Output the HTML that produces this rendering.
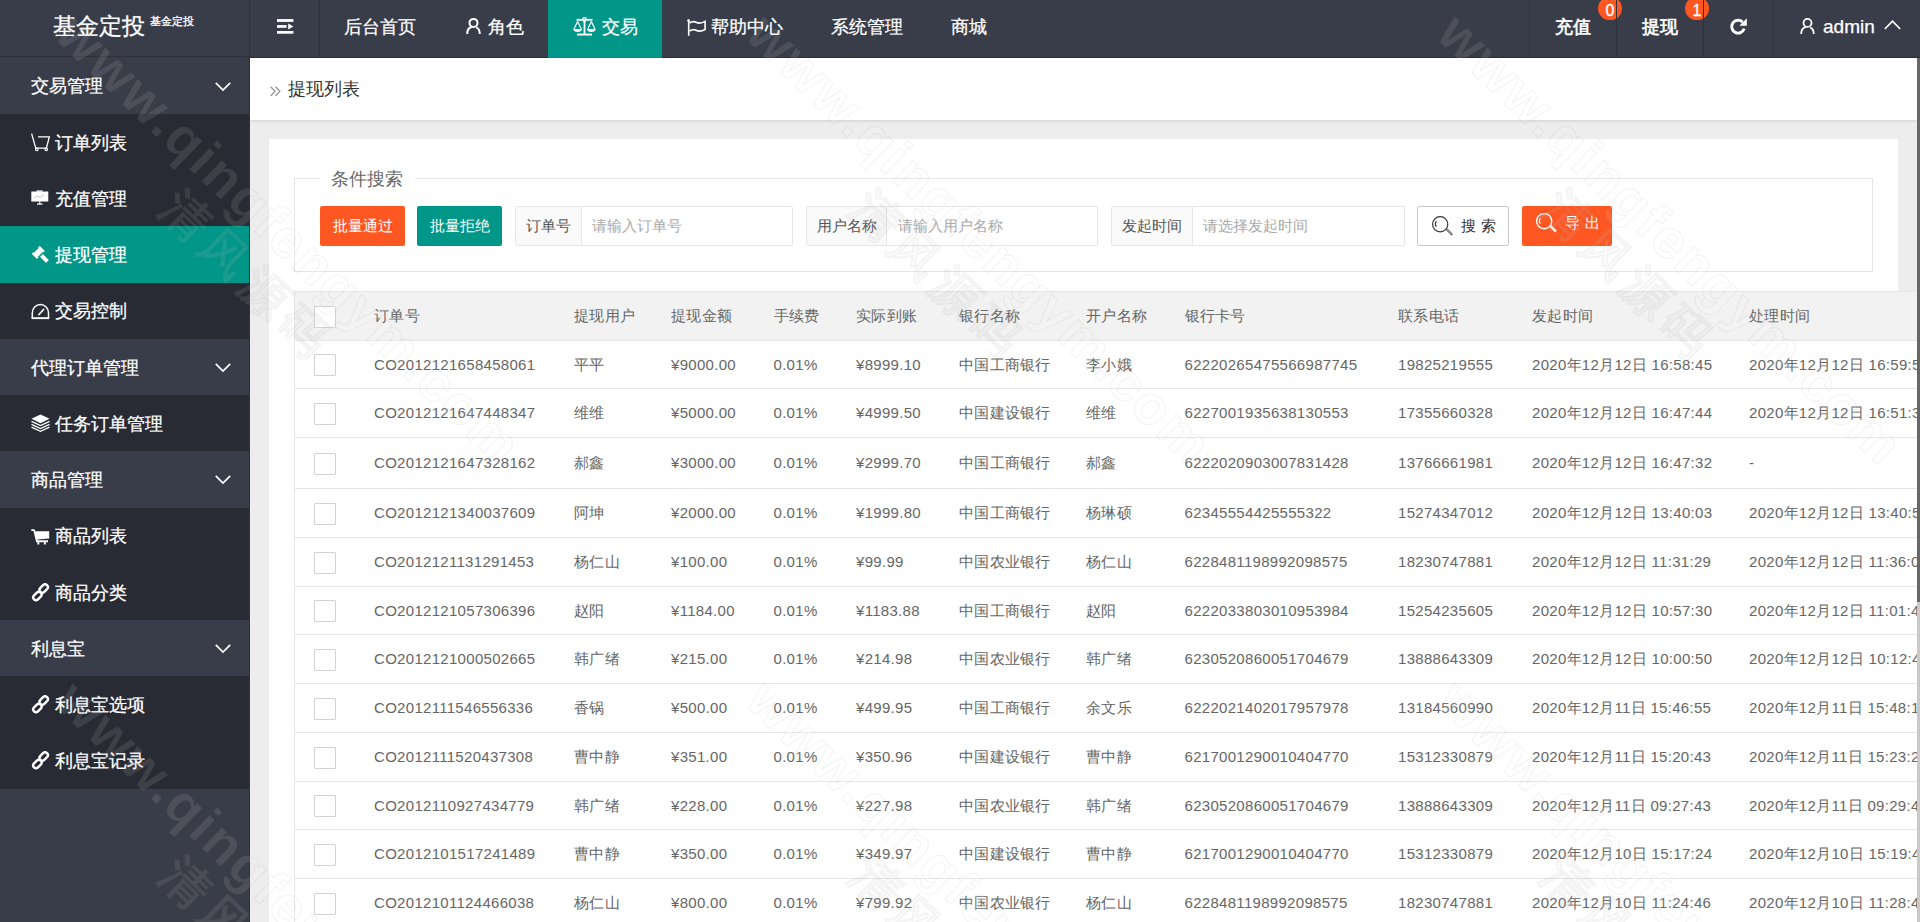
<!DOCTYPE html>
<html><head><meta charset="utf-8">
<style>
*{margin:0;padding:0;box-sizing:border-box}
html,body{width:1920px;height:922px;overflow:hidden;background:#EDEDED;font-family:"Liberation Sans",sans-serif;position:relative}
.abs{position:absolute}
svg{position:absolute;overflow:visible}
/* header */
#logo{position:absolute;left:0;top:0;width:250px;height:57px;background:#393D49;border-bottom:1px solid #2F323C;border-right:1px solid #2F323C}
#hdr{position:absolute;left:250px;top:0;width:1670px;height:58px;background:#393D49;border-bottom:1px solid #2C2F38}
.sep{position:absolute;top:0;width:1px;height:57px;background:#30333D;z-index:2}
.ht{position:absolute;color:#fff;font-size:17.5px;line-height:20px;top:17px;white-space:nowrap;-webkit-text-stroke:0.25px #fff}
#active{position:absolute;left:548px;top:0;width:114px;height:58px;background:#009688}
.badge{position:absolute;top:-3px;width:24px;height:23px;border-radius:12px;background:#FF5722;color:#fff;font-size:16px;line-height:27px;text-align:center;-webkit-text-stroke:0.3px #fff}
/* sidebar */
#side{position:absolute;left:0;top:57px;width:250px;height:865px;background:#393D49;border-right:1px solid #2F323C}
.mi{position:absolute;left:0;width:249px;height:56.25px;color:#fff;font-size:17.5px;-webkit-text-stroke:0.25px #fff}
.mi span{position:absolute;left:31px;top:18.75px;line-height:20px;white-space:nowrap}
.mi.sub span{left:55px}
.sub{background:#282B33}
.sel{background:#009688}
/* content */
#crumb{position:absolute;left:250px;top:58px;width:1667px;height:62px;background:#fff;box-shadow:0 1px 3px rgba(0,0,0,.12)}
#card{position:absolute;left:269px;top:139px;width:1629px;height:800px;background:#fff}
#fs{position:absolute;left:294px;top:178px;width:1579px;height:94px;border:1px solid #e6e6e6}
#legend{position:absolute;left:319.5px;top:168px;width:95px;height:22px;background:#fff;color:#666;font-size:17.5px;line-height:22px;text-align:center}
.btn{position:absolute;top:206px;height:40px;border-radius:2px;color:#fff;font-size:15px;line-height:40px;text-align:center;white-space:nowrap}
.ig{position:absolute;top:206px;height:40px;border:1px solid #e6e6e6;border-radius:2px;background:#fff}
.ig b{position:absolute;left:0;top:0;height:38px;background:#FAFAFA;border-right:1px solid #e6e6e6;font-weight:normal;color:#555;font-size:15px;line-height:38px;padding-left:10px}
.ig em{position:absolute;top:0;font-style:normal;color:#aaa;font-size:15px;line-height:38px}
/* table */
.tr{position:absolute;left:294px;width:1623px;border-bottom:1px solid #e6e6e6;background:#fff;color:#666;font-size:15px;letter-spacing:0.3px}
.tr.th{background:#F2F2F2;border-top:1px solid #e6e6e6}
.tr .c{position:absolute;top:50%;transform:translateY(-50%);line-height:20px;white-space:nowrap;margin-left:-295px}
.cb{position:absolute;left:19px;top:50%;margin-top:-10.5px;width:21.75px;height:22px;border:1px solid #d2d2d2;border-radius:1px;background:#fff}
#tblwrap{position:absolute;left:0;top:0;width:1917px;height:922px;overflow:hidden}
#tblwrap .tr:first-child{border-left:1px solid #e6e6e6}
.tr{border-left:1px solid #e6e6e6}
.wl{font-family:"Liberation Sans",sans-serif;font-weight:bold;font-size:55px;letter-spacing:2.2px;fill:rgba(255,255,255,0.1);stroke:rgba(0,0,0,0.055);stroke-width:1px}
.wc{font-family:"Liberation Sans",sans-serif;font-weight:bold;font-size:48px;letter-spacing:7px;fill:rgba(255,255,255,0.1);stroke:rgba(0,0,0,0.045);stroke-width:1px}
#scroll{position:absolute;left:1917px;top:58px;width:3px;height:864px;background:linear-gradient(#676767 0,#676767 544px,#C9C9C9 544px,#C9C9C9 100%);z-index:5}
</style></head>
<body>
<div id="logo">
  <div class="abs" style="left:53px;top:14.5px;color:#fff;font-size:22.5px;line-height:24px;white-space:nowrap;-webkit-text-stroke:0.3px #fff">基金定投</div>
  <div class="abs" style="left:150px;top:15px;color:#fff;font-size:11.25px;line-height:12px;white-space:nowrap;-webkit-text-stroke:0.3px #fff">基金定投</div>
</div>
<div id="hdr"></div>
<div class="sep" style="left:319px"></div>
<div id="active"></div>
<div class="sep" style="left:1529px"></div>
<div class="sep" style="left:1616px"></div>
<div class="sep" style="left:1703px"></div>
<div class="sep" style="left:1773px"></div>
<!-- hamburger -->
<svg style="left:277px;top:18px" width="18" height="17" viewBox="0 0 18 17"><rect x="0" y="1.1" width="16.4" height="2.8" fill="#fff"/><rect x="0" y="7.1" width="9.6" height="2.7" fill="#fff"/><path d="M11.2 5.4 L16.4 8.45 L11.2 11.5Z" fill="#fff"/><rect x="0" y="13" width="16.4" height="2.7" fill="#fff"/></svg>
<div class="ht" style="left:344px">后台首页</div>
<svg style="left:466px;top:18px" width="15" height="16" viewBox="0 0 15 16"><circle cx="7.5" cy="4.9" r="4" fill="none" stroke="#fff" stroke-width="2"/><path d="M1.2 16 C1.2 11.5 3.5 9.3 6.2 8.8 M10.2 9.4 C12.4 10.4 13.8 12.6 13.8 16" fill="none" stroke="#fff" stroke-width="2"/></svg>
<div class="ht" style="left:488px">角色</div>
<svg style="left:573px;top:17px" width="23" height="19" viewBox="0 0 23 19"><rect x="3.5" y="1.9" width="16" height="1.8" fill="#fff"/><circle cx="11.5" cy="2.5" r="1.8" fill="none" stroke="#fff" stroke-width="1.3"/><rect x="10.6" y="3.8" width="1.8" height="13" fill="#fff"/><rect x="4" y="16.6" width="15" height="1.9" fill="#fff"/><path d="M4.6 4.5 L1 12 M4.6 4.5 L8.3 12 M18.4 4.5 L14.8 12 M18.4 4.5 L22 12" stroke="#fff" stroke-width="1.2" fill="none"/><path d="M0.3 12 H9 C9 14 7 15 4.6 15 C2.2 15 0.3 14 0.3 12Z M14 12 H22.7 C22.7 14 20.8 15 18.4 15 C16 15 14 14 14 12Z" fill="#fff"/></svg>
<div class="ht" style="left:602px">交易</div>
<svg style="left:687px;top:19px" width="19" height="17" viewBox="0 0 19 17"><circle cx="1.6" cy="1.6" r="1.4" fill="#fff"/><rect x="0.9" y="1.5" width="1.6" height="15.3" fill="#fff"/><path d="M2.6 4 C4.8 2.4 7 2.3 9 3.3 C11 4.3 13.5 5 18.1 2.4 V10.5 C13.5 13 11 12.3 9 11.3 C7 10.3 4.8 10.4 2.6 12.2" fill="none" stroke="#fff" stroke-width="1.6"/></svg>
<div class="ht" style="left:711px">帮助中心</div>
<div class="ht" style="left:831px">系统管理</div>
<div class="ht" style="left:951px">商城</div>
<div class="ht" style="left:1555px;-webkit-text-stroke:0.6px #fff">充值</div>
<div class="badge" style="left:1598px">0</div>
<div class="ht" style="left:1642px;-webkit-text-stroke:0.6px #fff">提现</div>
<div class="badge" style="left:1685px">1</div>
<svg style="left:1730px;top:18px" width="17" height="17" viewBox="0 0 17 17"><path d="M14.2 10.6 A6.4 6.4 0 1 1 12.6 4.1" fill="none" stroke="#fff" stroke-width="2.9"/><path d="M16.8 0.3 V7.8 H9.3Z" fill="#fff"/></svg>
<svg style="left:1800px;top:18px" width="15" height="16" viewBox="0 0 15 16"><circle cx="7.5" cy="4.9" r="4" fill="none" stroke="#fff" stroke-width="1.8"/><path d="M1.2 16 C1.2 11.5 3.5 9.3 6.2 8.8 M10.2 9.4 C12.4 10.4 13.8 12.6 13.8 16" fill="none" stroke="#fff" stroke-width="1.8"/></svg>
<div class="ht" style="left:1823px;font-size:19px">admin</div>
<svg style="left:1884px;top:20px" width="17" height="10" viewBox="0 0 17 10"><path d="M0.8 9 L8.5 1.2 L16.2 9" fill="none" stroke="#fff" stroke-width="1.7"/></svg>

<!-- sidebar -->
<div id="side"></div>
<div class="mi" style="top:57.5px"><span>交易管理</span></div>
<div class="mi sub" style="top:113.75px"><span>订单列表</span></div>
<div class="mi sub" style="top:170.0px"><span>充值管理</span></div>
<div class="mi sub sel" style="top:226.25px"><span>提现管理</span></div>
<div class="mi sub" style="top:282.5px"><span>交易控制</span></div>
<div class="mi" style="top:338.75px"><span>代理订单管理</span></div>
<div class="mi sub" style="top:395.0px"><span>任务订单管理</span></div>
<div class="mi" style="top:451.25px"><span>商品管理</span></div>
<div class="mi sub" style="top:507.5px"><span>商品列表</span></div>
<div class="mi sub" style="top:563.75px"><span>商品分类</span></div>
<div class="mi" style="top:620.0px"><span>利息宝</span></div>
<div class="mi sub" style="top:676.25px"><span>利息宝选项</span></div>
<div class="mi sub" style="top:732.5px"><span>利息宝记录</span></div>
<!-- chevrons -->
<svg style="left:215px;top:82px" width="16" height="9" viewBox="0 0 16 9"><path d="M0.8 0.8 L8 8 L15.2 0.8" fill="none" stroke="#fff" stroke-width="1.7"/></svg>
<svg style="left:215px;top:363px" width="16" height="9" viewBox="0 0 16 9"><path d="M0.8 0.8 L8 8 L15.2 0.8" fill="none" stroke="#fff" stroke-width="1.7"/></svg>
<svg style="left:215px;top:475px" width="16" height="9" viewBox="0 0 16 9"><path d="M0.8 0.8 L8 8 L15.2 0.8" fill="none" stroke="#fff" stroke-width="1.7"/></svg>
<svg style="left:215px;top:644px" width="16" height="9" viewBox="0 0 16 9"><path d="M0.8 0.8 L8 8 L15.2 0.8" fill="none" stroke="#fff" stroke-width="1.7"/></svg>
<!-- sidebar icons -->
<svg style="left:31px;top:133px" width="19" height="18" viewBox="0 0 19 18"><path d="M0.6 0.6 L4.8 15.2 H15.4 L18.3 3.9 H7" fill="none" stroke="#fff" stroke-width="1.3"/><circle cx="5.8" cy="16.3" r="1.3" fill="none" stroke="#fff" stroke-width="1.1"/><circle cx="15.2" cy="16.3" r="1.3" fill="none" stroke="#fff" stroke-width="1.1"/></svg>
<svg style="left:31px;top:190px" width="18" height="15" viewBox="0 0 18 15"><rect x="5.5" y="0.3" width="6" height="1.6" fill="#ddd"/><rect x="0.3" y="1.5" width="17" height="10" fill="#fff"/><path d="M3 8 L6 6 L9 7.3 L13 4.5" stroke="#caa" stroke-width="0.8" fill="none"/><rect x="8.2" y="11.3" width="1.2" height="2.8" fill="#fff"/><rect x="6" y="13.5" width="5.5" height="1.2" fill="#fff"/></svg>
<svg style="left:31px;top:245px" width="19" height="19" viewBox="0 0 19 19"><g transform="translate(7.3 7.4) rotate(-45)" fill="#fff"><path d="M-5.6 -3.7 H-3.4 V-2.9 H3.4 V-3.7 H5.6 V3.7 H3.4 V2.9 H-3.4 V3.7 H-5.6Z"/><rect x="-2" y="4.4" width="4" height="8.6" rx="0.6"/></g></svg>
<svg style="left:31px;top:303px" width="19" height="17" viewBox="0 0 19 17"><path d="M1.3 15.2 V9.7 A8.1 8.1 0 0 1 17.5 9.7 V15.2" fill="none" stroke="#fff" stroke-width="1.5"/><rect x="0.6" y="14.2" width="17.6" height="1.9" fill="#fff"/><path d="M8 11.5 L12.5 6.5" stroke="#fff" stroke-width="1.8" stroke-linecap="round"/></svg>
<svg style="left:31px;top:414px" width="19" height="18" viewBox="0 0 19 18"><path d="M9.5 0.5 L18.5 4.8 L9.5 9.2 L0.5 4.8Z" fill="#fff"/><path d="M0.5 7.4 L9.5 11.6 L18.5 7.4 M0.5 10.3 L9.5 14.5 L18.5 10.3 M0.5 13.1 L9.5 17.3 L18.5 13.1" fill="none" stroke="#fff" stroke-width="1.3"/></svg>
<svg style="left:31px;top:529px" width="19" height="16" viewBox="0 0 19 16"><path d="M0.3 0.3 H3.6 L4.1 2.3 H18.2 V9.5 L6.5 10.4 L6.7 11.3 H17 V13.2 H14.8 V15.6 H12.9 V13.2 H8.3 V15.6 H6.4 V13.2 H5.2 L2.5 2 H0.3Z" fill="#fff"/></svg>
<!-- link icons -->
<svg style="left:31px;top:583px" width="19" height="19" viewBox="0 0 19 19"><g fill="none" stroke="#fff" stroke-width="2.4"><rect x="1.65" y="10.2" width="9.5" height="5.6" rx="2.8" transform="rotate(-45 6.4 13)"/><rect x="7.95" y="2.7" width="9.5" height="5.6" rx="2.8" transform="rotate(-45 12.7 5.5)"/></g></svg>
<svg style="left:31px;top:695px" width="19" height="19" viewBox="0 0 19 19"><g fill="none" stroke="#fff" stroke-width="2.4"><rect x="1.65" y="10.2" width="9.5" height="5.6" rx="2.8" transform="rotate(-45 6.4 13)"/><rect x="7.95" y="2.7" width="9.5" height="5.6" rx="2.8" transform="rotate(-45 12.7 5.5)"/></g></svg>
<svg style="left:31px;top:751px" width="19" height="19" viewBox="0 0 19 19"><g fill="none" stroke="#fff" stroke-width="2.4"><rect x="1.65" y="10.2" width="9.5" height="5.6" rx="2.8" transform="rotate(-45 6.4 13)"/><rect x="7.95" y="2.7" width="9.5" height="5.6" rx="2.8" transform="rotate(-45 12.7 5.5)"/></g></svg>

<!-- content -->
<div id="crumb">
  <svg style="left:20px;top:28px" width="11" height="11" viewBox="0 0 11 11"><path d="M0.7 0.7 L5 5.3 L0.7 9.9 M5.5 0.7 L9.8 5.3 L5.5 9.9" fill="none" stroke="#999" stroke-width="1.4"/></svg>
  <div class="abs" style="left:37.5px;top:21px;color:#333;font-size:17.5px;line-height:20px;white-space:nowrap">提现列表</div>
</div>
<div id="card"></div>
<div id="fs"></div>
<div id="legend">条件搜索</div>
<div class="btn" style="left:320px;width:85px;background:#FF5722">批量通过</div>
<div class="btn" style="left:417px;width:85px;background:#009688">批量拒绝</div>
<div class="ig" style="left:515px;width:278px"><b style="width:66px">订单号</b><em style="left:76px">请输入订单号</em></div>
<div class="ig" style="left:806px;width:292px"><b style="width:80px">用户名称</b><em style="left:91px">请输入用户名称</em></div>
<div class="ig" style="left:1111px;width:294px"><b style="width:81px">发起时间</b><em style="left:91px">请选择发起时间</em></div>
<div class="btn" style="left:1417px;width:92px;background:#fff;border:1px solid #C9C9C9;color:#333"></div>
<svg style="left:1432px;top:215.5px" width="21" height="21" viewBox="0 0 21 21"><circle cx="8.2" cy="8.2" r="7.6" fill="none" stroke="#333" stroke-width="1.2"/><path d="M4.3 5.2 A5.2 5.2 0 0 0 4.3 10.8" fill="none" stroke="#333" stroke-width="1.1"/><path d="M13.9 13.5 L19.5 19 M14.9 12.6 L20.4 18" stroke="#333" stroke-width="1"/><path d="M19.5 19 L20.4 18" stroke="#333" stroke-width="1"/></svg>
<div class="abs" style="left:1461px;top:216px;color:#333;font-size:15px;line-height:20px;white-space:nowrap;letter-spacing:5px">搜索</div>
<div class="btn" style="left:1522px;width:90px;background:#FF5722"></div>
<svg style="left:1535.5px;top:212.5px" width="21" height="21" viewBox="0 0 21 21"><circle cx="8.2" cy="8.2" r="7.6" fill="none" stroke="#fff" stroke-width="1.4"/><path d="M4.3 5.2 A5.2 5.2 0 0 0 4.3 10.8" fill="none" stroke="#fff" stroke-width="1.2"/><path d="M13.9 13.5 L19.5 19 M14.9 12.6 L20.4 18" stroke="#fff" stroke-width="1.1"/></svg>
<div class="abs" style="left:1565px;top:213px;color:#fff;font-size:15px;line-height:20px;white-space:nowrap;letter-spacing:5px">导出</div>

<div id="tblwrap">
<div class="tr th" style="top:291px;height:50px"><i class="cb"></i><span class="c" style="left:374px">订单号</span><span class="c" style="left:574px">提现用户</span><span class="c" style="left:671px">提现金额</span><span class="c" style="left:773.5px">手续费</span><span class="c" style="left:856px">实际到账</span><span class="c" style="left:959px">银行名称</span><span class="c" style="left:1086px">开户名称</span><span class="c" style="left:1184.5px">银行卡号</span><span class="c" style="left:1398px">联系电话</span><span class="c" style="left:1532px">发起时间</span><span class="c" style="left:1749px">处理时间</span></div>
<div class="tr" style="top:341px;height:48px"><i class="cb"></i><span class="c" style="left:374px">CO2012121658458061</span><span class="c" style="left:574px">平平</span><span class="c" style="left:671px">¥9000.00</span><span class="c" style="left:773.5px">0.01%</span><span class="c" style="left:856px">¥8999.10</span><span class="c" style="left:959px">中国工商银行</span><span class="c" style="left:1086px">李小娥</span><span class="c" style="left:1184.5px">62220265475566987745</span><span class="c" style="left:1398px">19825219555</span><span class="c" style="left:1532px">2020年12月12日 16:58:45</span><span class="c" style="left:1749px">2020年12月12日 16:59:55</span></div>
<div class="tr" style="top:389px;height:49px"><i class="cb"></i><span class="c" style="left:374px">CO2012121647448347</span><span class="c" style="left:574px">维维</span><span class="c" style="left:671px">¥5000.00</span><span class="c" style="left:773.5px">0.01%</span><span class="c" style="left:856px">¥4999.50</span><span class="c" style="left:959px">中国建设银行</span><span class="c" style="left:1086px">维维</span><span class="c" style="left:1184.5px">6227001935638130553</span><span class="c" style="left:1398px">17355660328</span><span class="c" style="left:1532px">2020年12月12日 16:47:44</span><span class="c" style="left:1749px">2020年12月12日 16:51:33</span></div>
<div class="tr" style="top:438px;height:51px"><i class="cb"></i><span class="c" style="left:374px">CO2012121647328162</span><span class="c" style="left:574px">郝鑫</span><span class="c" style="left:671px">¥3000.00</span><span class="c" style="left:773.5px">0.01%</span><span class="c" style="left:856px">¥2999.70</span><span class="c" style="left:959px">中国工商银行</span><span class="c" style="left:1086px">郝鑫</span><span class="c" style="left:1184.5px">6222020903007831428</span><span class="c" style="left:1398px">13766661981</span><span class="c" style="left:1532px">2020年12月12日 16:47:32</span><span class="c" style="left:1749px">-</span></div>
<div class="tr" style="top:489px;height:49px"><i class="cb"></i><span class="c" style="left:374px">CO2012121340037609</span><span class="c" style="left:574px">阿坤</span><span class="c" style="left:671px">¥2000.00</span><span class="c" style="left:773.5px">0.01%</span><span class="c" style="left:856px">¥1999.80</span><span class="c" style="left:959px">中国工商银行</span><span class="c" style="left:1086px">杨琳硕</span><span class="c" style="left:1184.5px">62345554425555322</span><span class="c" style="left:1398px">15274347012</span><span class="c" style="left:1532px">2020年12月12日 13:40:03</span><span class="c" style="left:1749px">2020年12月12日 13:40:53</span></div>
<div class="tr" style="top:538px;height:49px"><i class="cb"></i><span class="c" style="left:374px">CO2012121131291453</span><span class="c" style="left:574px">杨仁山</span><span class="c" style="left:671px">¥100.00</span><span class="c" style="left:773.5px">0.01%</span><span class="c" style="left:856px">¥99.99</span><span class="c" style="left:959px">中国农业银行</span><span class="c" style="left:1086px">杨仁山</span><span class="c" style="left:1184.5px">6228481198992098575</span><span class="c" style="left:1398px">18230747881</span><span class="c" style="left:1532px">2020年12月12日 11:31:29</span><span class="c" style="left:1749px">2020年12月12日 11:36:03</span></div>
<div class="tr" style="top:587px;height:48px"><i class="cb"></i><span class="c" style="left:374px">CO2012121057306396</span><span class="c" style="left:574px">赵阳</span><span class="c" style="left:671px">¥1184.00</span><span class="c" style="left:773.5px">0.01%</span><span class="c" style="left:856px">¥1183.88</span><span class="c" style="left:959px">中国工商银行</span><span class="c" style="left:1086px">赵阳</span><span class="c" style="left:1184.5px">6222033803010953984</span><span class="c" style="left:1398px">15254235605</span><span class="c" style="left:1532px">2020年12月12日 10:57:30</span><span class="c" style="left:1749px">2020年12月12日 11:01:43</span></div>
<div class="tr" style="top:635px;height:49px"><i class="cb"></i><span class="c" style="left:374px">CO2012121000502665</span><span class="c" style="left:574px">韩广绪</span><span class="c" style="left:671px">¥215.00</span><span class="c" style="left:773.5px">0.01%</span><span class="c" style="left:856px">¥214.98</span><span class="c" style="left:959px">中国农业银行</span><span class="c" style="left:1086px">韩广绪</span><span class="c" style="left:1184.5px">6230520860051704679</span><span class="c" style="left:1398px">13888643309</span><span class="c" style="left:1532px">2020年12月12日 10:00:50</span><span class="c" style="left:1749px">2020年12月12日 10:12:43</span></div>
<div class="tr" style="top:684px;height:49px"><i class="cb"></i><span class="c" style="left:374px">CO2012111546556336</span><span class="c" style="left:574px">香锅</span><span class="c" style="left:671px">¥500.00</span><span class="c" style="left:773.5px">0.01%</span><span class="c" style="left:856px">¥499.95</span><span class="c" style="left:959px">中国工商银行</span><span class="c" style="left:1086px">余文乐</span><span class="c" style="left:1184.5px">6222021402017957978</span><span class="c" style="left:1398px">13184560990</span><span class="c" style="left:1532px">2020年12月11日 15:46:55</span><span class="c" style="left:1749px">2020年12月11日 15:48:13</span></div>
<div class="tr" style="top:733px;height:49px"><i class="cb"></i><span class="c" style="left:374px">CO2012111520437308</span><span class="c" style="left:574px">曹中静</span><span class="c" style="left:671px">¥351.00</span><span class="c" style="left:773.5px">0.01%</span><span class="c" style="left:856px">¥350.96</span><span class="c" style="left:959px">中国建设银行</span><span class="c" style="left:1086px">曹中静</span><span class="c" style="left:1184.5px">6217001290010404770</span><span class="c" style="left:1398px">15312330879</span><span class="c" style="left:1532px">2020年12月11日 15:20:43</span><span class="c" style="left:1749px">2020年12月11日 15:23:23</span></div>
<div class="tr" style="top:782px;height:48px"><i class="cb"></i><span class="c" style="left:374px">CO2012110927434779</span><span class="c" style="left:574px">韩广绪</span><span class="c" style="left:671px">¥228.00</span><span class="c" style="left:773.5px">0.01%</span><span class="c" style="left:856px">¥227.98</span><span class="c" style="left:959px">中国农业银行</span><span class="c" style="left:1086px">韩广绪</span><span class="c" style="left:1184.5px">6230520860051704679</span><span class="c" style="left:1398px">13888643309</span><span class="c" style="left:1532px">2020年12月11日 09:27:43</span><span class="c" style="left:1749px">2020年12月11日 09:29:43</span></div>
<div class="tr" style="top:830px;height:49px"><i class="cb"></i><span class="c" style="left:374px">CO2012101517241489</span><span class="c" style="left:574px">曹中静</span><span class="c" style="left:671px">¥350.00</span><span class="c" style="left:773.5px">0.01%</span><span class="c" style="left:856px">¥349.97</span><span class="c" style="left:959px">中国建设银行</span><span class="c" style="left:1086px">曹中静</span><span class="c" style="left:1184.5px">6217001290010404770</span><span class="c" style="left:1398px">15312330879</span><span class="c" style="left:1532px">2020年12月10日 15:17:24</span><span class="c" style="left:1749px">2020年12月10日 15:19:43</span></div>
<div class="tr" style="top:879px;height:49px"><i class="cb"></i><span class="c" style="left:374px">CO2012101124466038</span><span class="c" style="left:574px">杨仁山</span><span class="c" style="left:671px">¥800.00</span><span class="c" style="left:773.5px">0.01%</span><span class="c" style="left:856px">¥799.92</span><span class="c" style="left:959px">中国农业银行</span><span class="c" style="left:1086px">杨仁山</span><span class="c" style="left:1184.5px">6228481198992098575</span><span class="c" style="left:1398px">18230747881</span><span class="c" style="left:1532px">2020年12月10日 11:24:46</span><span class="c" style="left:1749px">2020年12月10日 11:28:43</span></div>
</div>
<svg id="wm" style="left:0;top:0;pointer-events:none" width="1920" height="922" viewBox="0 0 1920 922"><g transform="translate(52.6 37) rotate(44)"><text x="0" y="0" class="wl">www.qingfengym.com</text><text x="196" y="53" class="wc">清风源码</text></g><g transform="translate(743.5 37) rotate(44)"><text x="0" y="0" class="wl">www.qingfengym.com</text><text x="196" y="53" class="wc">清风源码</text></g><g transform="translate(1434.5 37) rotate(44)"><text x="0" y="0" class="wl">www.qingfengym.com</text><text x="196" y="53" class="wc">清风源码</text></g><g transform="translate(52.6 704) rotate(44)"><text x="0" y="0" class="wl">www.qingfengym.com</text><text x="196" y="53" class="wc">清风源码</text></g><g transform="translate(743.5 704) rotate(44)"><text x="0" y="0" class="wl">www.qingfengym.com</text><text x="196" y="53" class="wc">清风源码</text></g><g transform="translate(1434.5 704) rotate(44)"><text x="0" y="0" class="wl">www.qingfengym.com</text><text x="196" y="53" class="wc">清风源码</text></g></svg>
<div id="scroll"></div>
</body></html>
